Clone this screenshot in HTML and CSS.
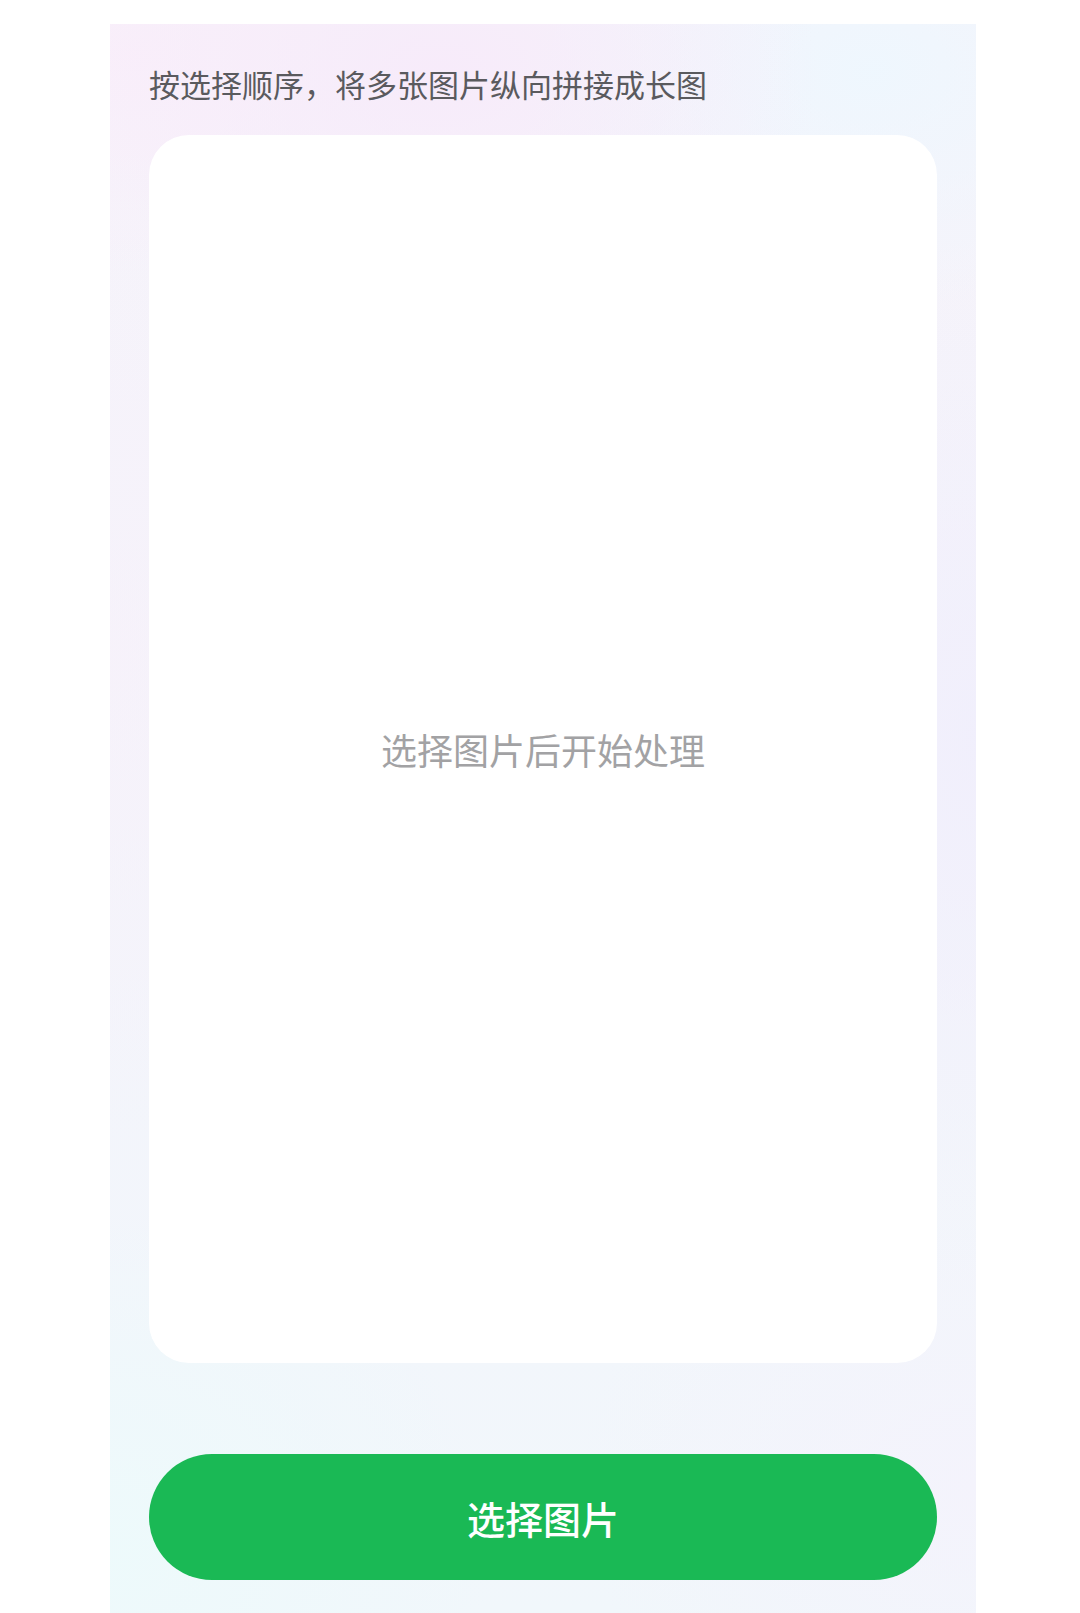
FILE: index.html
```html
<!DOCTYPE html>
<html lang="zh-CN">
<head>
<meta charset="utf-8">
<title>图片拼接</title>
<link rel="stylesheet" href="styles.css">
</head>
<body>
<main class="panel">
  <p class="intro">按选择顺序，将多张图片纵向拼接成长图</p>
  <section class="preview">
    <span class="placeholder">选择图片后开始处理</span>
  </section>
  <button class="pick-btn" type="button">选择图片</button>
</main>
</body>
</html>
```

FILE: styles.css
```css
html, body {
  margin: 0;
  padding: 0;
  background: #ffffff;
}

body {
  width: 1080px;
  height: 1613px;
  overflow: hidden;
  font-family: "Noto Sans CJK SC", "Noto Sans", sans-serif;
}

.panel {
  box-sizing: border-box;
  width: 866px;
  height: 1589px;
  margin: 24px 0 0 110px;
  padding: 38px 39px 0 39px;
  display: flex;
  flex-direction: column;
  background:
    radial-gradient(ellipse 380px 240px at 38% 3%, rgba(247, 234, 250, 0.9), rgba(247, 234, 250, 0) 100%),
    radial-gradient(ellipse 300px 220px at 2% 2%, rgba(249, 238, 250, 0.9), rgba(249, 238, 250, 0) 100%),
    radial-gradient(ellipse 360px 240px at 88% 3%, rgba(238, 247, 254, 0.95), rgba(238, 247, 254, 0) 100%),
    radial-gradient(ellipse 260px 480px at 100% 45%, rgba(240, 238, 252, 0.85), rgba(240, 238, 252, 0) 100%),
    radial-gradient(ellipse 240px 480px at 0% 40%, rgba(247, 241, 250, 0.7), rgba(247, 241, 250, 0) 100%),
    radial-gradient(ellipse 380px 340px at 0% 96%, rgba(237, 250, 251, 0.95), rgba(237, 250, 251, 0) 100%),
    radial-gradient(ellipse 400px 300px at 100% 92%, rgba(244, 243, 252, 1), rgba(244, 243, 252, 0) 100%),
    linear-gradient(180deg, #f6f3fa 0%, #f4f4fb 50%, #f1f7fb 100%);
}

.intro {
  margin: 0;
  font-size: 31px;
  line-height: 43px;
  color: #5a5a5e;
  letter-spacing: 0;
}

.preview {
  margin-top: 30px;
  height: 1228px;
  background: #ffffff;
  border-radius: 40px;
  display: flex;
  align-items: center;
  justify-content: center;
}

.placeholder {
  font-size: 36px;
  line-height: 50px;
  color: #a2a2a4;
}

.pick-btn {
  margin-top: 91px;
  height: 126px;
  width: 100%;
  border: none;
  border-radius: 63px;
  background: #1ab955;
  color: #ffffff;
  font-family: "Noto Sans CJK SC", "Noto Sans", sans-serif;
  font-size: 38px;
  font-weight: 500;
  letter-spacing: 0;
  padding: 0;
}
```
